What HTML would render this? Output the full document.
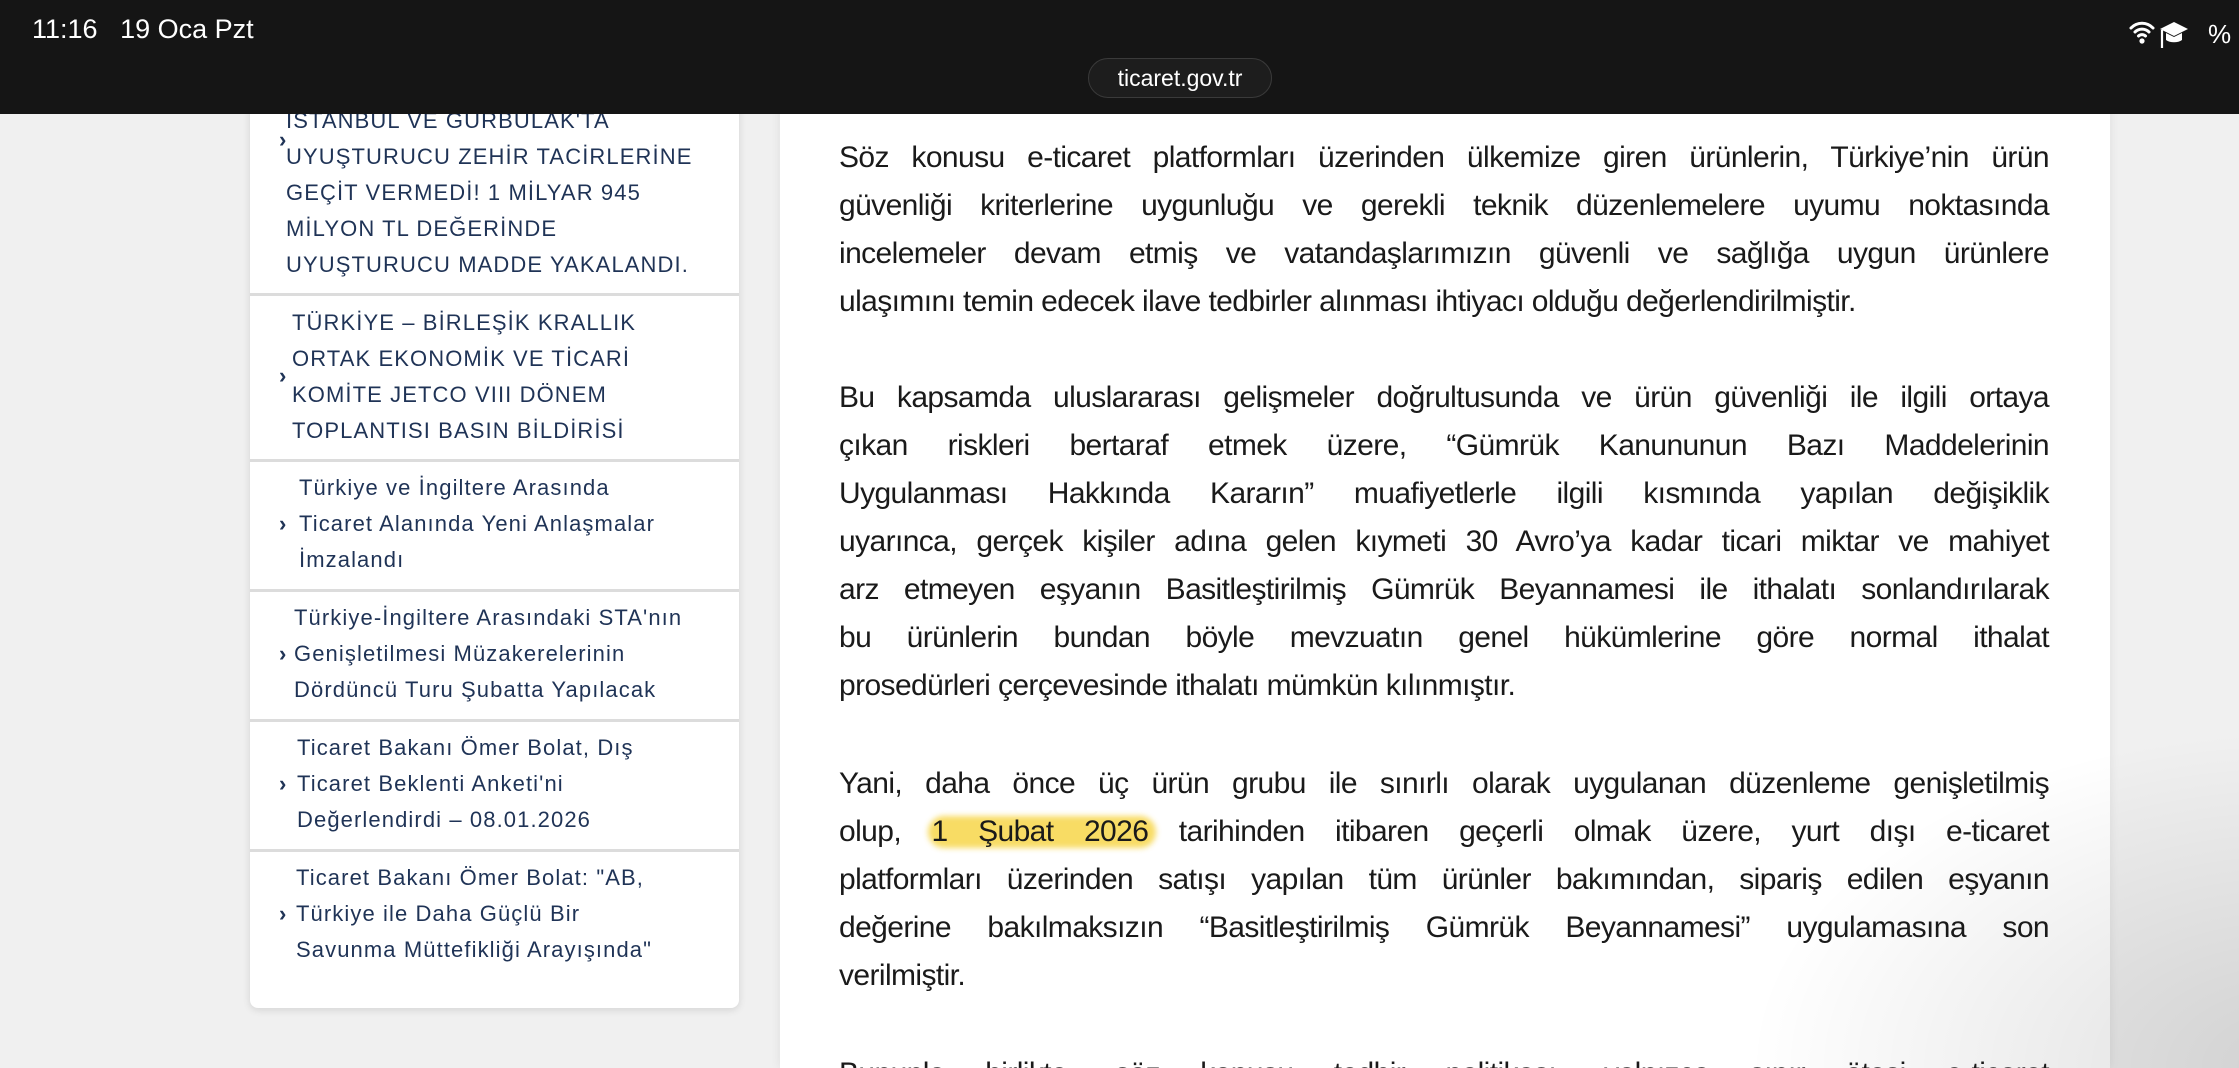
<!DOCTYPE html>
<html><head><meta charset="utf-8"><style>
*{margin:0;padding:0;box-sizing:border-box}
html,body{width:2239px;height:1068px;overflow:hidden}
body{background:#f0f0f0;position:relative;font-family:"Liberation Sans",sans-serif}
#w{position:absolute;left:0;top:0;width:2239px;height:1068px;overflow:hidden}
.side{position:absolute;left:250px;top:60px;width:489px;height:948px;background:#fff;border-radius:8px;box-shadow:0 2px 8px rgba(0,0,0,.12)}
.sep{position:absolute;left:250px;width:489px;height:3px;background:#dcdcdc}
.it{position:absolute;color:#1f3356;font-size:22px;letter-spacing:1.1px;line-height:36px;white-space:nowrap}
.chev{position:absolute;left:279px;color:#1f3356;font-size:22px;font-weight:bold;line-height:36px}
.main{position:absolute;left:780px;top:60px;width:1330px;height:1008px;background:#fff;box-shadow:0 0 10px rgba(0,0,0,.08)}
.shade{position:absolute;left:1700px;top:700px;width:600px;height:368px;background:radial-gradient(ellipse at 100% 100%,rgba(0,0,0,.13),rgba(0,0,0,0) 65%)}
.l{position:absolute;left:839px;width:1210px;font-size:30px;line-height:48px;color:#1a1a1a;white-space:nowrap;text-align:justify;text-align-last:justify;letter-spacing:-0.6px}
.l.e{text-align-last:left}
.hl{position:absolute;left:928px;top:816px;width:228px;height:32px;background:#f7d64a;border-radius:16px;filter:blur(3px);opacity:.85}
.hdr{position:absolute;left:0;top:0;width:2239px;height:114px;background:#151515}
.tm{position:absolute;left:32px;top:14px;color:#fff;font-size:27px}
.url{position:absolute;left:1088px;top:58px;width:184px;height:40px;border-radius:20px;background:#1d1d1d;border:1px solid #3a3a3a;color:#fff;font-size:23px;text-align:center;line-height:38px}
</style></head><body><div id="w">
<div class="side"></div>
<div class="sep" style="top:293px"></div>
<div class="sep" style="top:459px"></div>
<div class="sep" style="top:589px"></div>
<div class="sep" style="top:719px"></div>
<div class="sep" style="top:849px"></div>

<div class="it" style="left:286px;top:103px">İSTANBUL VE GÜRBULAK'TA<br>UYUŞTURUCU ZEHİR TACİRLERİNE<br>GEÇİT VERMEDİ! 1 MİLYAR 945<br>MİLYON TL DEĞERİNDE<br>UYUŞTURUCU MADDE YAKALANDI.</div>
<div class="chev" style="top:122px">›</div>
<div class="it" style="left:292px;top:305px">TÜRKİYE – BİRLEŞİK KRALLIK<br>ORTAK EKONOMİK VE TİCARİ<br>KOMİTE JETCO VIII DÖNEM<br>TOPLANTISI BASIN BİLDİRİSİ</div>
<div class="chev" style="top:358px">›</div>
<div class="it" style="left:299px;top:470px">Türkiye ve İngiltere Arasında<br>Ticaret Alanında Yeni Anlaşmalar<br>İmzalandı</div>
<div class="chev" style="top:506px">›</div>
<div class="it" style="left:294px;top:600px">Türkiye-İngiltere Arasındaki STA'nın<br>Genişletilmesi Müzakerelerinin<br>Dördüncü Turu Şubatta Yapılacak</div>
<div class="chev" style="top:636px">›</div>
<div class="it" style="left:297px;top:730px">Ticaret Bakanı Ömer Bolat, Dış<br>Ticaret Beklenti Anketi'ni<br>Değerlendirdi – 08.01.2026</div>
<div class="chev" style="top:766px">›</div>
<div class="it" style="left:296px;top:860px">Ticaret Bakanı Ömer Bolat: "AB,<br>Türkiye ile Daha Güçlü Bir<br>Savunma Müttefikliği Arayışında"</div>
<div class="chev" style="top:896px">›</div>

<div class="main"></div>
<div class="shade"></div>
<div class="hl"></div>

<div class="l" style="top:134px">Söz konusu e-ticaret platformları üzerinden ülkemize giren ürünlerin, Türkiye’nin ürün</div>
<div class="l" style="top:182px">güvenliği kriterlerine uygunluğu ve gerekli teknik düzenlemelere uyumu noktasında</div>
<div class="l" style="top:230px">incelemeler devam etmiş ve vatandaşlarımızın güvenli ve sağlığa uygun ürünlere</div>
<div class="l e" style="top:278px">ulaşımını temin edecek ilave tedbirler alınması ihtiyacı olduğu değerlendirilmiştir.</div>

<div class="l" style="top:374px">Bu kapsamda uluslararası gelişmeler doğrultusunda ve ürün güvenliği ile ilgili ortaya</div>
<div class="l" style="top:422px">çıkan riskleri bertaraf etmek üzere, “Gümrük Kanununun Bazı Maddelerinin</div>
<div class="l" style="top:470px">Uygulanması Hakkında Kararın” muafiyetlerle ilgili kısmında yapılan değişiklik</div>
<div class="l" style="top:518px">uyarınca, gerçek kişiler adına gelen kıymeti 30 Avro’ya kadar ticari miktar ve mahiyet</div>
<div class="l" style="top:566px">arz etmeyen eşyanın Basitleştirilmiş Gümrük Beyannamesi ile ithalatı sonlandırılarak</div>
<div class="l" style="top:614px">bu ürünlerin bundan böyle mevzuatın genel hükümlerine göre normal ithalat</div>
<div class="l e" style="top:662px">prosedürleri çerçevesinde ithalatı mümkün kılınmıştır.</div>

<div class="l" style="top:760px">Yani, daha önce üç ürün grubu ile sınırlı olarak uygulanan düzenleme genişletilmiş</div>
<div class="l" style="top:808px">olup, 1 Şubat 2026 tarihinden itibaren geçerli olmak üzere, yurt dışı e-ticaret</div>
<div class="l" style="top:856px">platformları üzerinden satışı yapılan tüm ürünler bakımından, sipariş edilen eşyanın</div>
<div class="l" style="top:904px">değerine bakılmaksızın “Basitleştirilmiş Gümrük Beyannamesi” uygulamasına son</div>
<div class="l e" style="top:952px">verilmiştir.</div>
<div class="l" style="top:1050px">Bununla birlikte, söz konusu tedbir politikası, yalnızca sınır ötesi e-ticaret</div>

<div class="hdr">
<div class="tm">11:16&nbsp;&nbsp;&nbsp;19 Oca Pzt</div>
<div class="url">ticaret.gov.tr</div>
<svg style="position:absolute;left:2128px;top:16px" width="111" height="36" viewBox="0 0 111 36">
<path d="M3 12a15 15 0 0 1 22 0M7 16a10 10 0 0 1 14 0M10.5 20a5 5 0 0 1 7 0" stroke="#fff" stroke-width="3" fill="none" stroke-linecap="round"/><circle cx="14" cy="25" r="2.6" fill="#fff"/>
<path d="M32 13l14-7 14 7-14 7z" fill="#fff"/><path d="M38 17v7c4 3 12 3 16 0v-7l-8 4z" fill="#fff"/><path d="M34 14v18" stroke="#fff" stroke-width="2.2"/>
<text x="80" y="27" fill="#fff" font-size="26" font-family="Liberation Sans">%</text>
</svg>
</div>
</div></body></html>
